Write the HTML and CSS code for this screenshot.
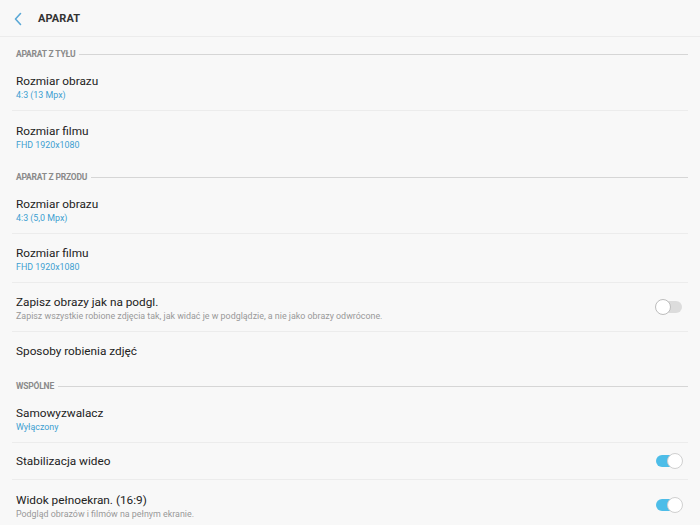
FILE: index.html
```html
<!DOCTYPE html>
<html lang="pl">
<head>
<meta charset="utf-8">
<link rel="stylesheet" href="styles.css">
</head>
<body>
<div class="page">
  <header class="topbar">
    <svg class="back" width="10" height="14" viewBox="0 0 10 14"><path d="M7.5 1.5 L2.5 7 L7.5 12.5" fill="none" stroke="#5aa8d6" stroke-width="1.6" stroke-linecap="round" stroke-linejoin="round"/></svg>
    <span class="title">APARAT</span>
  </header>

  <div class="section"><span>APARAT Z TYŁU</span><i></i></div>
  <div class="row two">
    <div class="texts"><div class="t">Rozmiar obrazu</div><div class="s blue">4:3 (13 Mpx)</div></div>
  </div>
  <div class="row two last">
    <div class="texts"><div class="t">Rozmiar filmu</div><div class="s blue">FHD 1920x1080</div></div>
  </div>

  <div class="section"><span>APARAT Z PRZODU</span><i></i></div>
  <div class="row two">
    <div class="texts"><div class="t">Rozmiar obrazu</div><div class="s blue">4:3 (5,0 Mpx)</div></div>
  </div>
  <div class="row two">
    <div class="texts"><div class="t">Rozmiar filmu</div><div class="s blue">FHD 1920x1080</div></div>
  </div>
  <div class="row two">
    <div class="texts"><div class="t">Zapisz obrazy jak na podgl.</div><div class="s grey">Zapisz wszystkie robione zdjęcia tak, jak widać je w podglądzie, a nie jako obrazy odwrócone.</div></div>
    <span class="toggle off"></span>
  </div>
  <div class="row one last">
    <div class="texts"><div class="t">Sposoby robienia zdjęć</div></div>
  </div>

  <div class="section"><span>WSPÓLNE</span><i></i></div>
  <div class="row two">
    <div class="texts"><div class="t">Samowyzwalacz</div><div class="s blue">Wyłączony</div></div>
  </div>
  <div class="row one">
    <div class="texts"><div class="t">Stabilizacja wideo</div></div>
    <span class="toggle on"></span>
  </div>
  <div class="row two last">
    <div class="texts"><div class="t">Widok pełnoekran. (16:9)</div><div class="s grey">Podgląd obrazów i filmów na pełnym ekranie.</div></div>
    <span class="toggle on"></span>
  </div>
</div>
</body>
</html>
```
FILE: styles.css
```css
html, body {
  margin: 0;
  padding: 0;
  background: #f8f8f8;
}
body {
  font-family: Roboto, "Liberation Sans", sans-serif;
  color: #222;
  width: 700px;
  height: 525px;
  overflow: hidden;
}
.page {
  display: flex;
  flex-direction: column;
}
.topbar {
  height: 37px;
  box-sizing: border-box;
  border-bottom: 1px solid #ececec;
  display: flex;
  align-items: center;
  padding-left: 13px;
  padding-top: 1px;
}
.back {
  display: block;
}
.title {
  margin-left: 15px;
  font-size: 11px;
  font-weight: bold;
  color: #333;
  letter-spacing: 0.1px;
}
.section {
  height: 25px;
  box-sizing: border-box;
  display: flex;
  align-items: center;
  padding: 9px 12px 0 16px;
  gap: 4px;
}
.section span {
  font-size: 8.5px;
  font-weight: bold;
  color: #8a8a8a;
  letter-spacing: -0.2px;
  white-space: nowrap;
}
.section i {
  flex: 1;
  height: 1px;
  background: #d6d6d6;
}
.row {
  margin: 0 12px;
  padding: 0 6px 0 4px;
  display: flex;
  align-items: center;
  box-sizing: border-box;
  border-bottom: 1px solid #ececec;
}
.row.last {
  border-bottom: none;
}
.row.two { height: 49px; }
.row.one { height: 37px; }
.texts {
  flex: 1;
}
.row.two .texts { padding-top: 2px; }
.row.one .texts { padding-top: 0; }
.t {
  font-size: 11.8px;
  line-height: 16px;
  color: #222;
}
.s {
  font-size: 8.9px;
  line-height: 12px;
  margin-top: 0;
}
.s.blue { color: #3d9fd1; }
.s.grey { color: #999; }
.toggle {
  position: relative;
  width: 26px;
  height: 12px;
  border-radius: 6px;
  flex: none;
}
.toggle.off { background: #dcdcdc; }
.toggle.on { background: #4dbde8; }
.toggle::after {
  content: "";
  position: absolute;
  top: -2px;
  width: 16px;
  height: 16px;
  border-radius: 50%;
  background: #fff;
  box-sizing: border-box;
  border: 1px solid #c8c8c8;
}
.toggle.off::after { left: -1px; border-color: #bdbdbd; }
.toggle.on::after { right: -1px; border-color: #d0d0d0; }
```
